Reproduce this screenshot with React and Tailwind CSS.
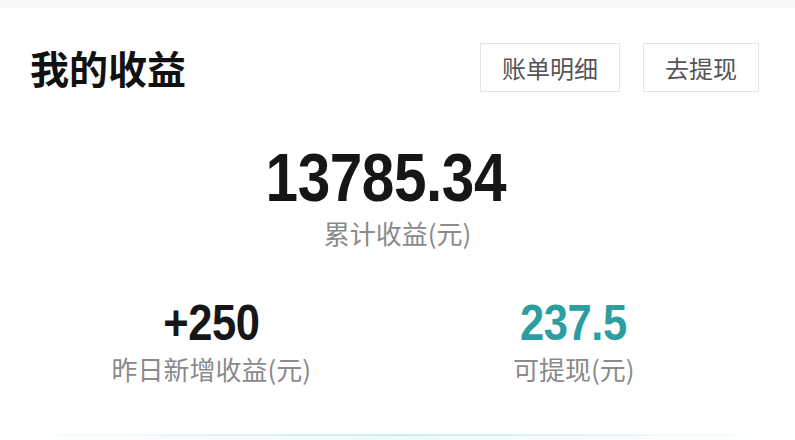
import React from 'react'

const cjk = { fontFamily: '"Noto Sans CJK SC", "Noto Sans", sans-serif' }
const num = { fontFamily: '"Liberation Sans", Arial, sans-serif' }

const Stat = ({ value, label, teal }) => (
  <div className="flex flex-col items-center">
    <div
      className={`inline-block scale-x-[0.87] text-[50px] font-bold leading-none tracking-[-0.5px] ${
        teal ? 'text-[#2a9ea0]' : 'text-[#161616]'
      }`}
      style={num}
    >
      {value}
    </div>
    <div className="mt-[8px] text-[26px] leading-none text-[#8a8a8a]" style={cjk}>
      {label}
    </div>
  </div>
)

export default function App() {
  return (
    <div className="relative w-[795px] h-[440px] overflow-hidden bg-white">
      {/* 顶部灰条 */}
      <div className="h-[8px] bg-[#f8f8fb]" />

      {/* 标题栏 */}
      <div className="flex items-center justify-between pl-[30px] pr-[36px] pt-[35px]">
        <h1 className="text-[39px] font-bold leading-none text-[#111]" style={cjk}>
          我的收益
        </h1>
        <div className="flex gap-[23px]">
          <button
            className="h-[49px] px-[21px] border border-[#e4e4e4] bg-white text-[24px] text-[#555]"
            style={cjk}
          >
            账单明细
          </button>
          <button
            className="h-[49px] px-[21px] border border-[#e4e4e4] bg-white text-[24px] text-[#555]"
            style={cjk}
          >
            去提现
          </button>
        </div>
      </div>

      {/* 累计收益 */}
      <div className="flex flex-col items-center pt-[51px]">
        <div
          className="inline-block -translate-x-[12px] scale-x-[0.86] text-[68px] font-bold leading-none tracking-[-0.5px] text-[#161616]"
          style={num}
        >
          13785.34
        </div>
        <div className="mt-[9px] text-[26px] leading-none text-[#8a8a8a]" style={cjk}>
          累计收益(元)
        </div>
      </div>

      {/* 昨日 / 可提现 */}
      <div className="grid grid-cols-2 pl-[30px] pr-[40px] pt-[52px]">
        <Stat value="+250" label="昨日新增收益(元)" />
        <Stat value="237.5" label="可提现(元)" teal />
      </div>

      {/* 底部卡片边缘 */}
      <div className="absolute left-0 right-0 bottom-[4px] h-[2px] bg-gradient-to-r from-white via-[#c8eeee] to-white" />
      <div className="absolute left-0 right-0 bottom-0 h-[4px] bg-gradient-to-r from-white via-[#eefafa] to-white" />
    </div>
  )
}
